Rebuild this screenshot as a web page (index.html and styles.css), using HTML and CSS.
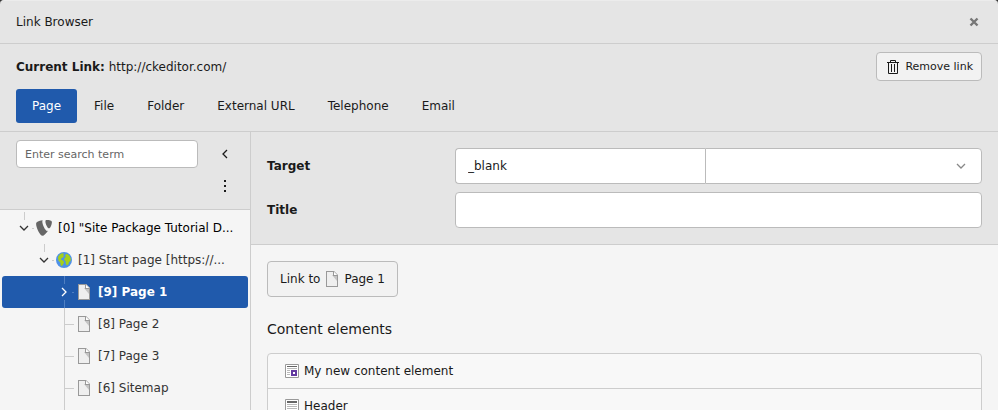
FILE: index.html
```html
<!DOCTYPE html>
<html lang="en">

<head>
    <meta charset="UTF-8">
    <meta name="viewport" content="width=device-width, initial-scale=1.0">
    <title>Link Browser</title>
    <link rel="stylesheet" href="styles.css">
</head>

<body>

    <!-- shared icons -->
    <svg class="sprite" aria-hidden="true">
        <symbol id="icon-page" viewBox="0 0 16 16">
            <path fill="#efefef" d="M2 0h8l4 4v12H2z" />
            <path fill="#c4c4c4" d="M8 4l5 6V4z" />
            <path fill="#999" d="M2 0v16h12V4l-4-4H2zm1 1h6v4h4v10H3V1zm7 0l3 3h-3V1z" />
            <path fill="#fff" d="M10 1l3 3h-3z" />
        </symbol>
        <symbol id="icon-down" viewBox="0 0 16 16">
            <path fill="none" stroke="currentColor" stroke-width="1.3" d="M4 6l4 4 4-4" />
        </symbol>
        <symbol id="icon-right" viewBox="0 0 16 16">
            <path fill="none" stroke="currentColor" stroke-width="1.3" d="M6 4l4 4-4 4" />
        </symbol>
    </svg>

    <div class="modal">
        <header class="modal-header">
            <h1>Link Browser</h1>
            <button type="button" class="close" aria-label="Close">
                <svg width="16" height="16" viewBox="0 0 16 16"><path fill="none" stroke="currentColor" stroke-width="2.4" d="M4.5 4.5l7 7M11.5 4.5l-7 7" /></svg>
            </button>
        </header>

        <div class="current-link">
            <p><strong>Current Link:</strong> http://ckeditor.com/</p>
            <button type="button" class="btn btn-sm">
                <svg width="16" height="16" viewBox="0 0 16 16"><path fill="none" stroke="currentColor" d="M2 3.5h12M5.5 3V1.5h5V3M3.5 4v10.5h9V4M6.5 5v8M9.5 5v8" /></svg>
                Remove link
            </button>
        </div>

        <nav class="tabs">
            <a href="#page" class="active">Page</a>
            <a href="#file">File</a>
            <a href="#folder">Folder</a>
            <a href="#url">External URL</a>
            <a href="#telephone">Telephone</a>
            <a href="#email">Email</a>
        </nav>

        <div class="panes">
            <aside class="sidebar">
                <div class="toolbar">
                    <input type="text" class="search" placeholder="Enter search term" aria-label="Enter search term">
                    <div class="toolbar-buttons">
                        <button type="button" aria-label="Collapse">
                            <svg width="16" height="16" viewBox="0 0 16 16"><path fill="none" stroke="currentColor" stroke-width="1.3" d="M10 4L6 8l4 4" /></svg>
                        </button>
                        <button type="button" aria-label="Options">
                            <svg width="16" height="16" viewBox="0 0 16 16"><path fill="currentColor" d="M7 2h2v2H7zM7 7h2v2H7zM7 12h2v2H7z" /></svg>
                        </button>
                    </div>
                </div>

                <ul class="tree">
                    <li class="node">
                        <button type="button" class="toggle" aria-label="Collapse root">
                            <svg width="22" height="32"><path class="line" d="M10.5 0v8M18 16.5h2" /><use href="#icon-down" x="2" y="8" width="16" height="16" /></svg>
                        </button>
                        <svg width="16" height="16" viewBox="0 0 16 16"><path fill="#666" d="M12 10.8c-.3.1-.5.1-.8.1-2 0-4.9-6.9-4.9-9.2 0-.8.2-1.1.5-1.4C4.3.6 1.4 1.5.5 2.6.3 2.9.1 3.4.1 4c0 3.6 3.8 11.8 6.5 11.8 1.3 0 3.4-2.1 5.4-5M10.9.1c2.5 0 5 .4 5 1.8 0 2.9-1.8 6.4-2.8 6.4-1.6 0-3.7-4.6-3.7-6.9 0-1.1.4-1.3 1.5-1.3" /></svg>
                        <span class="root">[0] "Site Package Tutorial D...</span>
                    </li>
                    <li class="node level-1">
                        <button type="button" class="toggle" aria-label="Collapse start page">
                            <svg width="22" height="32"><path class="line" d="M10.5 0v8M18 16.5h2" /><use href="#icon-down" x="2" y="8" width="16" height="16" /></svg>
                        </button>
                        <svg width="16" height="16" viewBox="0 0 16 16">
                            <circle cx="8" cy="8" r="8" fill="#4e91e8" />
                            <path fill="#a5d01b" d="M2 5l1.500-2.200L6 1.300l2 .5-.8 1.400.8 1-1.500 1.500L5 6.500l.2 1.300 1.800.7 1.200 1.500-.7 1.700L6 14l-1.300-.5-.4-3L2.500 8.700zM9 3l2-1.300 2.300 1.800 1.500 3-.2 2.500-1.600 1-.5 2.200-1.500 1.300-1.200-1.500-.2-2.700L8.200 8l.2-2 1.400-1z" />
                        </svg>
                        <span>[1] Start page [https://...</span>
                    </li>
                    <li class="node level-2 selected">
                        <button type="button" class="toggle" aria-label="Expand Page 1">
                            <svg width="22" height="32"><path class="line" d="M10.5 0v8M10.5 24v8M18 16.5h2" /><use href="#icon-right" x="2" y="8" width="16" height="16" /></svg>
                        </button>
                        <svg width="16" height="16"><use href="#icon-page" /></svg>
                        <span>[9] Page 1</span>
                    </li>
                    <li class="node level-2">
                        <svg width="22" height="32"><path class="line" d="M10.5 0v32M11 16.5h9" /></svg>
                        <svg width="16" height="16"><use href="#icon-page" /></svg>
                        <span>[8] Page 2</span>
                    </li>
                    <li class="node level-2">
                        <svg width="22" height="32"><path class="line" d="M10.5 0v32M11 16.5h9" /></svg>
                        <svg width="16" height="16"><use href="#icon-page" /></svg>
                        <span>[7] Page 3</span>
                    </li>
                    <li class="node level-2">
                        <svg width="22" height="32"><path class="line" d="M10.5 0v32M11 16.5h9" /></svg>
                        <svg width="16" height="16"><use href="#icon-page" /></svg>
                        <span>[6] Sitemap</span>
                    </li>
                    <li class="node level-2">
                        <svg width="22" height="32"><path class="line" d="M10.5 0v32" /></svg>
                    </li>
                </ul>
            </aside>

            <main class="content">
                <form class="link-form">
                    <label for="target">Target</label>
                    <div class="input-group">
                        <input type="text" id="target" value="_blank">
                        <div class="select-wrap">
                            <select aria-label="Target preset">
                                <option></option>
                            </select>
                            <svg width="16" height="16"><use href="#icon-down" /></svg>
                        </div>
                    </div>
                    <label for="title">Title</label>
                    <input type="text" id="title">
                </form>

                <div class="content-body">
                    <button type="button" class="btn">
                        Link to
                        <svg width="16" height="16"><use href="#icon-page" /></svg>
                        Page 1
                    </button>

                    <h2>Content elements</h2>
                    <ul class="elements">
                        <li>
                            <a href="#element-1">
                                <svg width="16" height="16" viewBox="0 0 16 16">
                                    <path fill="#fff" stroke="#999" d="M1.5 1.5h13v13h-13z" />
                                    <path fill="#666" d="M3 3h10v1H3z" />
                                    <path fill="#b9b9b9" d="M3 5h10v1H3zM3 7h3v1H3zM3 9h3v1H3zM3 11h3v1H3z" />
                                    <path fill="#633aa0" d="M7 7h6v6H7z" />
                                    <path fill="#fff" d="M9 9h2v2H9z" />
                                </svg>
                                My new content element
                            </a>
                        </li>
                        <li>
                            <a href="#element-2">
                                <svg width="16" height="16" viewBox="0 0 16 16">
                                    <path fill="#fff" stroke="#999" d="M1.5 1.5h13v13h-13z" />
                                    <path fill="#666" d="M3 3h10v2H3z" />
                                    <path fill="#b9b9b9" d="M3 6h10v1H3zM3 8h10v1H3zM3 10h10v1H3zM3 12h10v1H3z" />
                                </svg>
                                Header
                            </a>
                        </li>
                    </ul>
                </div>
            </main>
        </div>
    </div>

</body>

</html>
```

FILE: styles.css
```css
* {
    box-sizing: border-box;
}

body {
    margin: 0;
    background-color: #333;
    color: #1a1a1a;
    font-family: "DejaVu Sans", Verdana, sans-serif;
    font-size: 12px;
    line-height: 18px;
}

h1, h2, p, ul {
    margin: 0;
    padding: 0;
}

ul {
    list-style: none;
}

svg {
    flex-shrink: 0;
}

a {
    color: inherit;
    text-decoration: none;
}

button, input, select {
    font: inherit;
    color: inherit;
}

button {
    cursor: pointer;
}

.sprite {
    display: none;
}

.modal {
    display: flex;
    flex-direction: column;
    height: 100vh;
    overflow: hidden;
    border-top: 1px solid #ececec;
    border-radius: 4px 4px 0 0;
    background-color: #e5e5e5;
}

.modal-header {
    display: flex;
    align-items: center;
    justify-content: space-between;
    padding: 12px 16px;
    border-bottom: 1px solid #cdcdcd;
}

.modal-header h1 {
    font-size: 12px;
    font-weight: normal;
}

.close,
.toggle,
.toolbar-buttons button {
    display: flex;
    padding: 0;
    border: none;
    background: none;
}

.close {
    color: #777;
}

.current-link {
    display: flex;
    align-items: center;
    justify-content: space-between;
    padding: 8px 16px;
}

.btn {
    display: inline-flex;
    align-items: center;
    gap: 4px;
    height: 36px;
    padding: 0 12px;
    border: 1px solid #bbb;
    border-radius: 4px;
    background-color: #f2f2f2;
}

.btn-sm {
    height: 29px;
    padding: 0 8px;
    font-size: 11px;
}

.tabs {
    display: flex;
    gap: 1px;
    padding: 0 16px 8px;
    border-bottom: 1px solid #cdcdcd;
}

.tabs a {
    padding: 8px 16px;
    border-radius: 3px;
}

.tabs .active {
    background-color: #205aac;
    color: #fff;
}

.panes {
    display: flex;
    flex: 1;
    min-height: 0;
}

/* page tree */
.sidebar {
    width: 251px;
    flex-shrink: 0;
    overflow: hidden;
    border-right: 1px solid #cdcdcd;
    background-color: #f5f5f5;
}

.toolbar {
    display: flex;
    align-items: flex-start;
    justify-content: space-between;
    padding: 8px 17px 9px 16px;
    border-bottom: 1px solid #cdcdcd;
    background-color: #e5e5e5;
}

.search {
    width: 182px;
    height: 28px;
    padding: 0 8px;
    border: 1px solid #bbb;
    border-radius: 4px;
    background-color: #fff;
    font-size: 11px;
}

.search::placeholder {
    color: #666;
    opacity: 1;
}

.toolbar-buttons {
    display: flex;
    flex-direction: column;
    gap: 16px;
    padding: 6px 0;
}

.tree {
    padding: 2px;
}

.node {
    display: flex;
    align-items: center;
    height: 32px;
    padding: 0 4px 0 12px;
    border-radius: 3px;
    color: #333;
}

.node span {
    margin-left: 6px;
    overflow: hidden;
    text-overflow: ellipsis;
    white-space: nowrap;
}

.node .root {
    color: #000;
}

.level-1 {
    padding-left: 32px;
}

.level-2 {
    padding-left: 52px;
}

.selected {
    background-color: #205aac;
    color: #fff;
    font-weight: bold;
}

.line {
    fill: none;
    stroke: #ccc;
}

.selected .line {
    stroke: #4f7fc2;
}

/* link options */
.content {
    flex: 1;
    min-width: 0;
    background-color: #f5f5f5;
}

.link-form {
    display: grid;
    grid-template-columns: 180px 1fr;
    gap: 8px;
    align-items: center;
    padding: 16px;
    border-bottom: 1px solid #cdcdcd;
    background-color: #e5e5e5;
}

.link-form label {
    font-weight: bold;
}

.link-form input,
.link-form select {
    width: 100%;
    height: 36px;
    padding: 0 12px;
    border: 1px solid #bbb;
    border-radius: 4px;
    background-color: #fff;
}

.input-group {
    display: grid;
    grid-template-columns: 9fr 10fr;
}

.input-group input {
    border-right: none;
    border-radius: 4px 0 0 4px;
}

.select-wrap {
    display: grid;
    align-items: center;
    color: #888;
}

.select-wrap select,
.select-wrap svg {
    grid-area: 1 / 1;
}

.select-wrap select {
    border-radius: 0 4px 4px 0;
    appearance: none;
}

.select-wrap svg {
    justify-self: end;
    margin-right: 13px;
    pointer-events: none;
}

.content-body {
    padding: 16px;
}

h2 {
    padding: 22px 0 14px;
    font-size: 14px;
    font-weight: normal;
    line-height: 20px;
}

.elements {
    border: 1px solid #cdcdcd;
    border-radius: 4px;
    background-color: #f8f8f8;
}

.elements li + li {
    border-top: 1px solid #cdcdcd;
}

.elements a {
    display: flex;
    align-items: center;
    gap: 4px;
    padding: 8px 16px;
}
```
